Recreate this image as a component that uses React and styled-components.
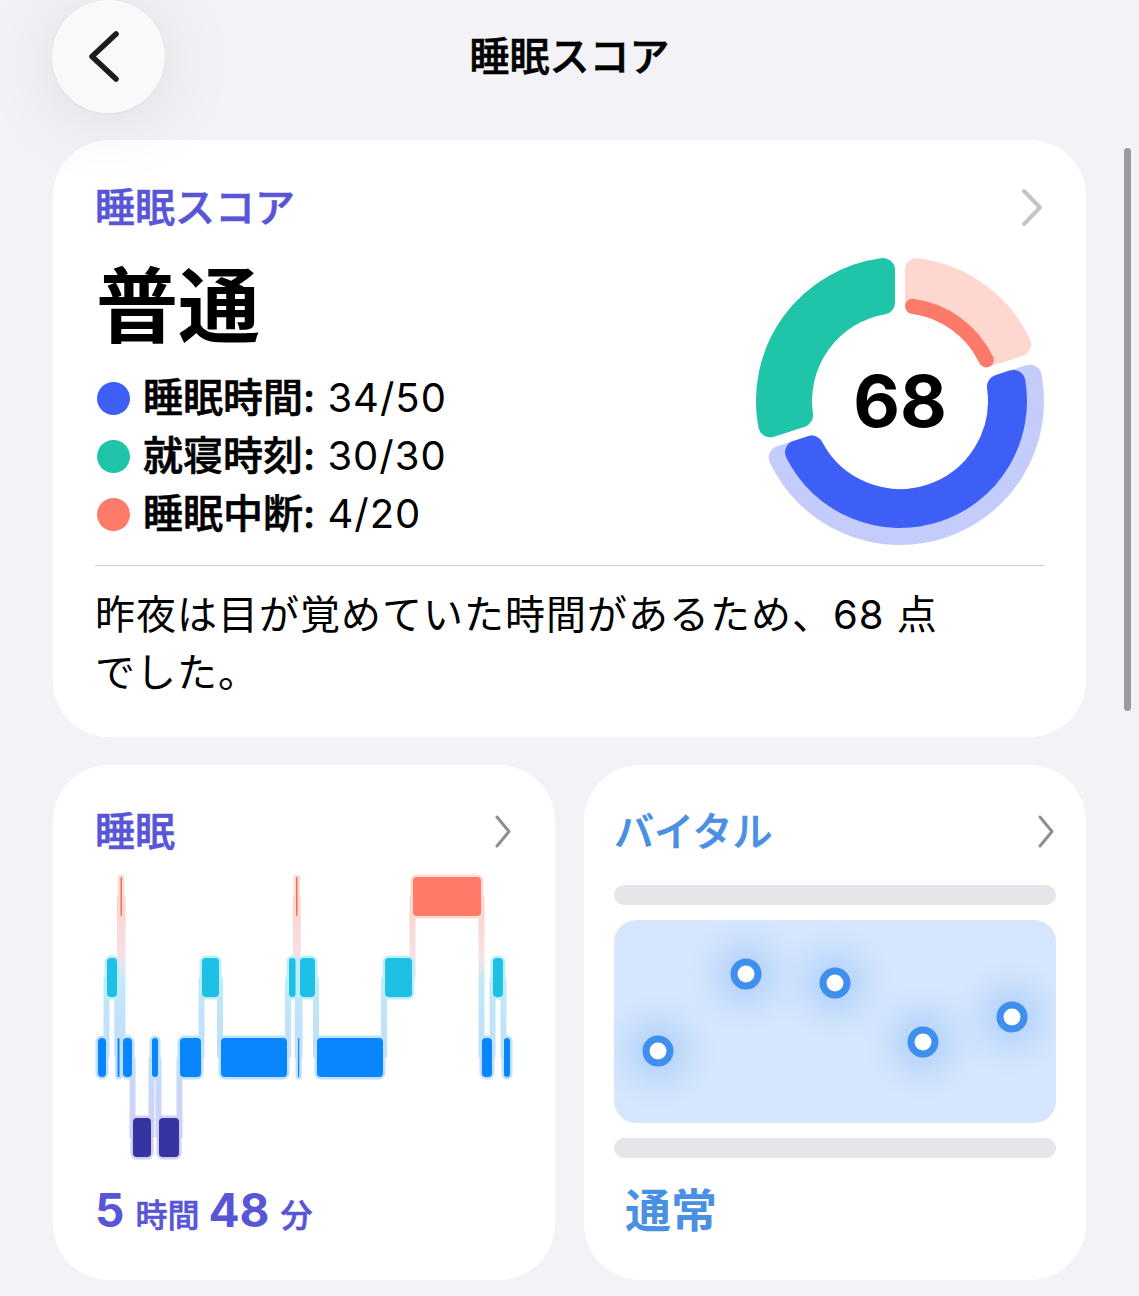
import React from "react";
import styled, { createGlobalStyle, css } from "styled-components";

const GlobalStyle = createGlobalStyle`
  html, body {
    margin: 0;
    padding: 0;
    background: #f2f2f7;
  }
  body {
    font-family: Inter, "Noto Sans CJK JP", "Noto Sans", sans-serif;
    color: #000;
    overflow: hidden;
    -webkit-font-smoothing: antialiased;
  }
  * { box-sizing: border-box; }
`;

const PURPLE = "#5856d6";
const SKY = "#4a90e2";

// medium face thickened a touch, sitting between the medium and bold cuts
const semibold = css`
  font-weight: 500;
  -webkit-text-stroke: 0.6px currentColor;
`;

/* ---------- page shell ---------- */

const Screen = styled.div`
  position: relative;
  width: 1139px;
  height: 1296px;
  overflow: hidden;
  background: #f2f2f7;
`;

const Header = styled.header`
  display: grid;
  grid-template-columns: 1fr auto 1fr;
  align-items: center;
  height: 113px;
`;

const BackButton = styled.button`
  position: relative;
  z-index: 2;
  justify-self: start;
  margin-left: 52px;
  width: 113px;
  height: 113px;
  padding: 0;
  border: none;
  border-radius: 50%;
  background: #f9f9fb;
  box-shadow: 0 6px 80px rgba(0, 0, 0, 0.1), 0 1px 4px rgba(0, 0, 0, 0.03);
  display: flex;
  align-items: center;
  justify-content: center;
  svg { margin-right: 9px; }
`;

const PageTitle = styled.h1`
  margin: 0;
  font-size: 40px;
  line-height: 48px;
  color: #000;
  ${semibold}
`;

const ScrollThumb = styled.div`
  position: absolute;
  top: 148px;
  right: 8px;
  width: 7px;
  height: 563px;
  border-radius: 4px;
  background: #9a9a9f;
`;

const Card = styled.section`
  background: #fff;
  border-radius: 56px;
`;

const CardHeader = styled.div`
  display: flex;
  align-items: center;
  justify-content: space-between;
  height: 48px;
`;

const CardTitle = styled.h2`
  margin: 0;
  font-size: 40px;
  line-height: 48px;
  color: ${(p) => p.$color};
  ${semibold}
`;

/* ---------- score card ---------- */

const ScoreCard = styled(Card)`
  margin: 27px 53px 0;
  padding: 44px 41px 35px 42px;
`;

const ScoreBody = styled.div`
  display: flex;
  align-items: center;
  justify-content: space-between;
  margin-top: 27px;
`;

const ScoreText = styled.div`
  display: flex;
  flex-direction: column;
`;

const Rating = styled.div`
  font-size: 82px;
  line-height: 96px;
  font-weight: 700;
  margin-left: 1px;
`;

const Legend = styled.ul`
  list-style: none;
  margin: 14px 0 0;
  padding: 0;
`;

const LegendRow = styled.li`
  display: flex;
  align-items: center;
  height: 58px;
  font-size: 40px;
  line-height: 48px;
`;

const Dot = styled.span`
  width: 33px;
  height: 33px;
  border-radius: 50%;
  margin: 0 13px 0 2px;
  background: ${(p) => p.$color};
  flex: none;
`;

const LegendLabel = styled.span`
  ${semibold}
`;

const LegendValue = styled.span`
  font-weight: 400;
  letter-spacing: 1px;
  white-space: pre;
`;

const DonutWrap = styled.div`
  width: 300px;
  height: 300px;
  margin: -8px -5px -8px 0;
  flex: none;
`;

const Divider = styled.hr`
  margin: 22px 0 0;
  border: none;
  height: 1px;
  background: #cfcfd4;
`;

const Summary = styled.p`
  margin: 20px 0 0;
  font-size: 40px;
  line-height: 58px;
  font-weight: 400;
  letter-spacing: 1px;
`;

/* ---------- lower tiles ---------- */

const TileGrid = styled.div`
  display: grid;
  grid-template-columns: 1fr 1fr;
  gap: 29px;
  margin: 28px 53px 0;
`;

const Tile = styled(Card)`
  height: 515px;
  display: flex;
  flex-direction: column;
  padding: 43px ${(p) => p.$side}px 42px;
`;

const ChartBox = styled.div`
  margin-top: ${(p) => p.$gap}px;
  height: 290px;
  svg { display: block; }
`;

const Duration = styled.div`
  display: flex;
  align-items: baseline;
  margin-top: 20px;
  height: 56px;
  color: ${PURPLE};
`;

const DurationNum = styled.span`
  font-size: 46px;
  line-height: 56px;
  font-weight: 700;
`;

const DurationUnit = styled.span`
  font-size: 32px;
  margin: 0 9px 0 11px;
  ${semibold}
`;

const Track = styled.div`
  height: 20px;
  border-radius: 10px;
  background: #e5e5ea;
  margin-top: ${(p) => p.$gap}px;
`;

const VitalPanel = styled.div`
  margin-top: 15px;
  height: 203px;
  border-radius: 22px;
  background: #d6e7fd;
  overflow: hidden;
  svg { display: block; }
`;

const VitalStatus = styled.div`
  margin: 24px 0 0 11px;
  font-size: 46px;
  line-height: 56px;
  font-weight: 700;
  color: ${SKY};
`;

/* ---------- icons ---------- */

const BackChevron = () => (
  <svg width="30" height="51" viewBox="0 0 30 51" fill="none">
    <path d="M27 3 L3 25.5 L27 48" stroke="#1c1c1e" strokeWidth="5.5" strokeLinecap="round" strokeLinejoin="round" />
  </svg>
);

const ForwardChevron = ({ big }) =>
  big ? (
    <svg width="26" height="40" viewBox="0 0 26 40" fill="none">
      <path d="M5 3 L21 19.5 L5 36" stroke="#c4c4c8" strokeWidth="4" strokeLinecap="round" strokeLinejoin="round" />
    </svg>
  ) : (
    <svg width="20" height="36" viewBox="0 0 20 36" fill="none">
      <path d="M4 3 L16 17.5 L4 32" stroke="#8e8e93" strokeWidth="3" strokeLinecap="round" strokeLinejoin="round" />
    </svg>
  );

/* ---------- score donut ---------- */

const toRad = (d) => (d * Math.PI) / 180;
const toDeg = (r) => (r * 180) / Math.PI;
const polar = (cx, cy, r, a) => [cx + r * Math.sin(toRad(a)), cy - r * Math.cos(toRad(a))];

// Annular sector whose ends sit `inset` px off the radial boundaries; the
// geometry is pulled in by `c` so a round-joined stroke of width 2c rounds it.
function sectorPath(cx, cy, r0, r1, a0, a1, inset, c) {
  const ri = r0 + c;
  const ro = r1 - c;
  const d = inset + c;
  const oa0 = a0 + toDeg(Math.asin(d / ro));
  const oa1 = a1 - toDeg(Math.asin(d / ro));
  const ia0 = a0 + toDeg(Math.asin(d / ri));
  const ia1 = a1 - toDeg(Math.asin(d / ri));
  const [x1, y1] = polar(cx, cy, ro, oa0);
  const [x2, y2] = polar(cx, cy, ro, oa1);
  const [x3, y3] = polar(cx, cy, ri, ia1);
  const [x4, y4] = polar(cx, cy, ri, ia0);
  const lo = oa1 - oa0 > 180 ? 1 : 0;
  const li = ia1 - ia0 > 180 ? 1 : 0;
  return `M${x1} ${y1} A${ro} ${ro} 0 ${lo} 1 ${x2} ${y2} L${x3} ${y3} A${ri} ${ri} 0 ${li} 0 ${x4} ${y4} Z`;
}

const R_IN = 88;
const R_OUT = 144;

const SCORE_PARTS = [
  { key: "coral", from: 0, to: 72, fillOuter: 103, track: "#ffd7d1", fill: "#fb7b68" },
  { key: "blue", from: 72, to: 252, fillOuter: 127, track: "#c4ccfb", fill: "#3e5ff5" },
  { key: "teal", from: 252, to: 360, fillOuter: 144, track: "#bfeee5", fill: "#1fc4a9" },
];

const Shape = ({ d, color, c }) => (
  <path d={d} fill={color} stroke={color} strokeWidth={c * 2} strokeLinejoin="round" />
);

const ScoreDonut = ({ score }) => (
  <svg width="300" height="300" viewBox="0 0 300 300">
    {SCORE_PARTS.map((p) => {
      const ct = 12;
      const cf = Math.min(12, (p.fillOuter - R_IN) / 2 - 0.2);
      return (
        <g key={p.key}>
          <Shape d={sectorPath(150, 150, R_IN, R_OUT, p.from, p.to, 5, ct)} color={p.track} c={ct} />
          <Shape d={sectorPath(150, 150, R_IN, p.fillOuter, p.from, p.to, 5, cf)} color={p.fill} c={cf} />
        </g>
      );
    })}
    <text
      x="150"
      y="176"
      textAnchor="middle"
      fontFamily="Inter, 'Noto Sans', sans-serif"
      fontSize="72"
      fontWeight="700"
      fill="#000"
    >
      {score}
    </text>
  </svg>
);

/* ---------- hypnogram ---------- */

const STAGES = {
  awake: { top: 5, fill: "#fe7b67", halo: "#ffdad4" },
  rem: { top: 86, fill: "#1ec0e6", halo: "#bdeefa" },
  light: { top: 166, fill: "#0a86fc", halo: "#bfe0ff" },
  deep: { top: 246, fill: "#3634a3", halo: "#d0cff3" },
};
const ROW_H = 39;
const X0 = 95;

const SEGMENTS = [
  ["light", 98, 106],
  ["rem", 107, 117],
  ["light", 117.5, 119.5],
  ["awake", 120.5, 122],
  ["light", 123, 132],
  ["deep", 133, 151],
  ["light", 152, 158],
  ["deep", 159, 179],
  ["light", 180, 201],
  ["rem", 202, 219],
  ["light", 221, 287],
  ["rem", 289, 295.5],
  ["awake", 296, 297.5],
  ["light", 298, 299.2],
  ["rem", 300, 315],
  ["light", 317, 383],
  ["rem", 385, 412],
  ["awake", 413, 481],
  ["light", 482, 492],
  ["rem", 493, 503],
  ["light", 504, 510],
];

const Hypnogram = () => {
  const links = SEGMENTS.slice(1).map((seg, i) => {
    const prev = SEGMENTS[i];
    const x = (prev[2] + seg[1]) / 2 - X0;
    const ya = STAGES[prev[0]].top + ROW_H / 2;
    const yb = STAGES[seg[0]].top + ROW_H / 2;
    return { x, y: Math.min(ya, yb), h: Math.abs(ya - yb) };
  });
  return (
    <svg width="418" height="290" viewBox="0 0 418 290">
      <defs>
        <linearGradient id="stageLink" gradientUnits="userSpaceOnUse" x1="0" y1="0" x2="0" y2="290">
          <stop offset="0.1" stopColor="#ffd0c8" />
          <stop offset="0.3" stopColor="#f3e3ea" />
          <stop offset="0.38" stopColor="#bfeaf8" />
          <stop offset="0.64" stopColor="#c2dcfb" />
          <stop offset="0.92" stopColor="#d2d0f2" />
        </linearGradient>
      </defs>
      {links.map((l, i) => (
        <rect key={`l${i}`} x={l.x - 3} y={l.y} width="6" height={l.h} fill="url(#stageLink)" />
      ))}
      {SEGMENTS.map(([stage, a, b], i) => {
        const s = STAGES[stage];
        const w = b - a;
        return (
          <rect
            key={`h${i}`}
            x={a - X0 - 2.5}
            y={s.top - 2.5}
            width={w + 5}
            height={ROW_H + 5}
            rx={Math.min(6.5, (w + 5) / 2)}
            fill={s.halo}
          />
        );
      })}
      {SEGMENTS.map(([stage, a, b], i) => {
        const s = STAGES[stage];
        const w = b - a;
        const thin = w < 3;
        return (
          <rect
            key={`b${i}`}
            x={a - X0}
            y={s.top}
            width={w}
            height={ROW_H}
            rx={thin ? w / 2 : Math.min(4, w / 2)}
            fill={thin && stage === "awake" ? "#ea6f66" : s.fill}
          />
        );
      })}
    </svg>
  );
};

/* ---------- vitals ---------- */

const VITAL_POINTS = [
  [44, 131],
  [132, 54],
  [221, 63],
  [309, 122],
  [398, 97],
];

const VitalsChart = () => (
  <svg width="442" height="203" viewBox="0 0 442 203">
    <defs>
      <radialGradient id="vitalGlow">
        <stop offset="0" stopColor="#8fbdf6" stopOpacity="0.6" />
        <stop offset="0.35" stopColor="#a4c9f8" stopOpacity="0.4" />
        <stop offset="0.7" stopColor="#bcd8fa" stopOpacity="0.15" />
        <stop offset="1" stopColor="#d6e7fd" stopOpacity="0" />
      </radialGradient>
    </defs>
    {VITAL_POINTS.map(([x, y], i) => (
      <circle key={`g${i}`} cx={x} cy={y} r="72" fill="url(#vitalGlow)" />
    ))}
    {VITAL_POINTS.map(([x, y], i) => (
      <circle key={`p${i}`} cx={x} cy={y} r="12" fill="#fff" stroke="#3f8fec" strokeWidth="7" />
    ))}
  </svg>
);

/* ---------- page ---------- */

const LEGEND = [
  { label: "睡眠時間:", value: " 34/50", color: "#3e5ff5" },
  { label: "就寝時刻:", value: " 30/30", color: "#1fc4a9" },
  { label: "睡眠中断:", value: " 4/20", color: "#fd7b68" },
];

export default function App() {
  return (
    <Screen>
      <GlobalStyle />
      <Header>
        <BackButton aria-label="戻る">
          <BackChevron />
        </BackButton>
        <PageTitle>睡眠スコア</PageTitle>
      </Header>

      <ScoreCard>
        <CardHeader>
          <CardTitle $color={PURPLE}>睡眠スコア</CardTitle>
          <ForwardChevron big />
        </CardHeader>
        <ScoreBody>
          <ScoreText>
            <Rating>普通</Rating>
            <Legend>
              {LEGEND.map((row) => (
                <LegendRow key={row.label}>
                  <Dot $color={row.color} />
                  <LegendLabel>{row.label}</LegendLabel>
                  <LegendValue>{row.value}</LegendValue>
                </LegendRow>
              ))}
            </Legend>
          </ScoreText>
          <DonutWrap>
            <ScoreDonut score={68} />
          </DonutWrap>
        </ScoreBody>
        <Divider />
        <Summary>
          昨夜は目が覚めていた時間があるため、68 点
          <br />
          でした。
        </Summary>
      </ScoreCard>

      <TileGrid>
        <Tile $side={42}>
          <CardHeader>
            <CardTitle $color={PURPLE}>睡眠</CardTitle>
            <ForwardChevron />
          </CardHeader>
          <ChartBox $gap={16}>
            <Hypnogram />
          </ChartBox>
          <Duration>
            <DurationNum>5</DurationNum>
            <DurationUnit>時間</DurationUnit>
            <DurationNum>48</DurationNum>
            <DurationUnit>分</DurationUnit>
          </Duration>
        </Tile>

        <Tile $side={30}>
          <CardHeader>
            <CardTitle $color={SKY}>バイタル</CardTitle>
            <ForwardChevron />
          </CardHeader>
          <Track $gap={29} />
          <VitalPanel>
            <VitalsChart />
          </VitalPanel>
          <Track $gap={15} />
          <VitalStatus>通常</VitalStatus>
        </Tile>
      </TileGrid>

      <ScrollThumb />
    </Screen>
  );
}
